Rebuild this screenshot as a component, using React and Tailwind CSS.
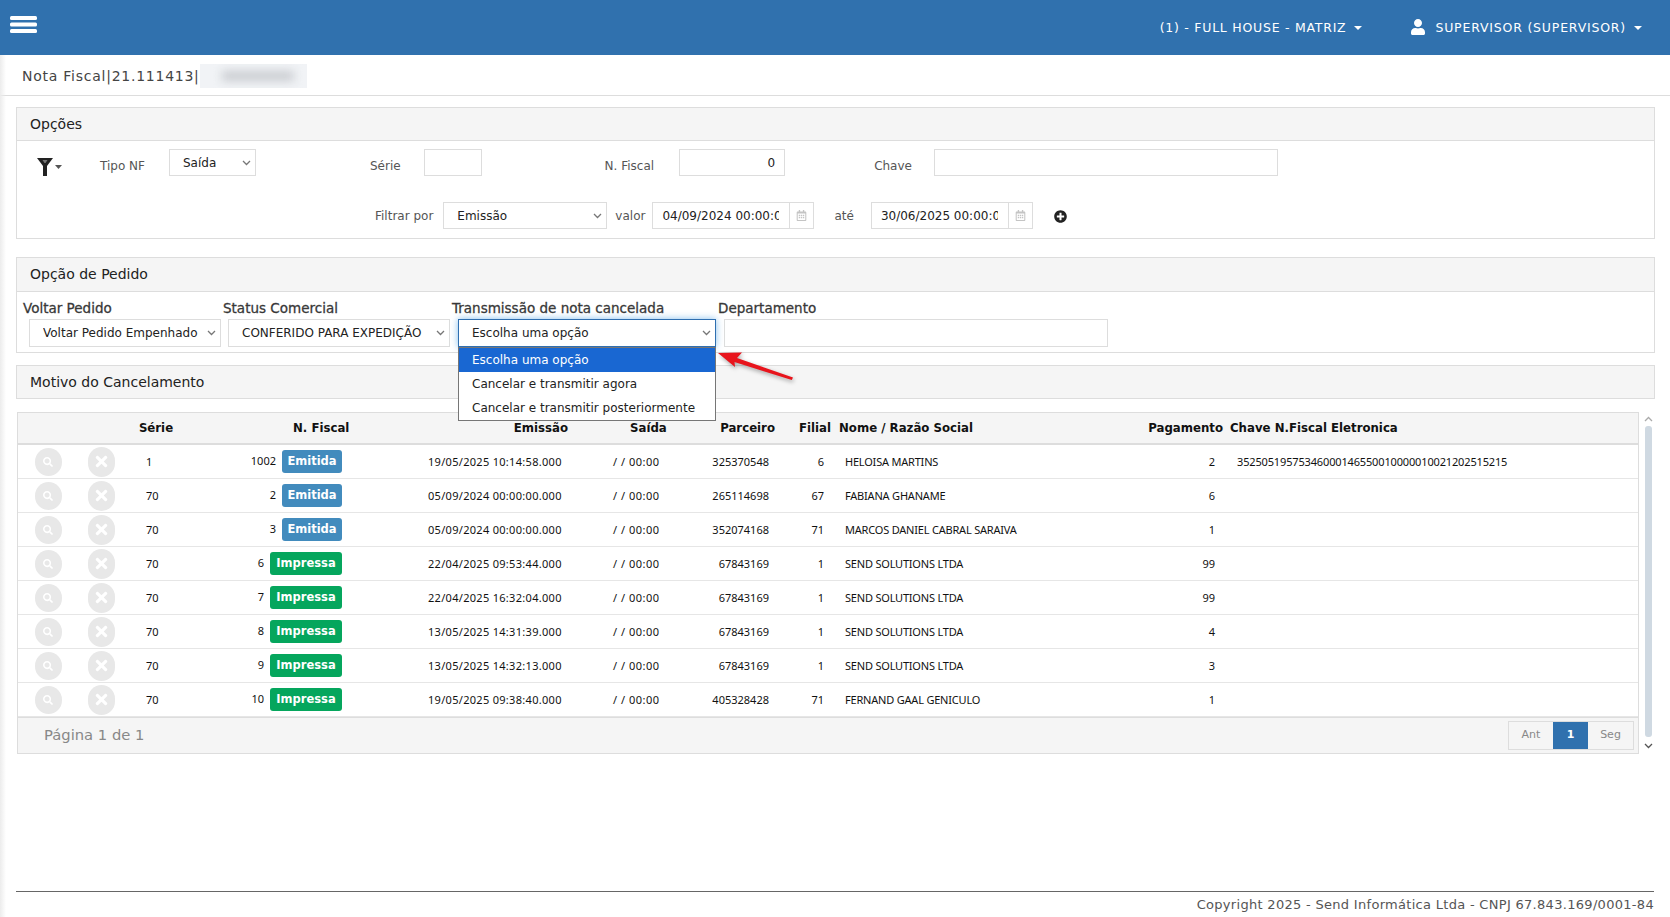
import React from 'react';
import { FaUser, FaSearch, FaTimes, FaPlusCircle, FaRegCalendarAlt } from 'react-icons/fa';

const rows = [
  { serie: '1', nf: '1002', status: 'Emitida', emissao: '19/05/2025 10:14:58.000', parceiro: '325370548', filial: '6', nome: 'HELOISA MARTINS', pag: '2', chave: '35250519575346000146550010000010021202515215' },
  { serie: '70', nf: '2', status: 'Emitida', emissao: '05/09/2024 00:00:00.000', parceiro: '265114698', filial: '67', nome: 'FABIANA GHANAME', pag: '6', chave: '' },
  { serie: '70', nf: '3', status: 'Emitida', emissao: '05/09/2024 00:00:00.000', parceiro: '352074168', filial: '71', nome: 'MARCOS DANIEL CABRAL SARAIVA', pag: '1', chave: '' },
  { serie: '70', nf: '6', status: 'Impressa', emissao: '22/04/2025 09:53:44.000', parceiro: '67843169', filial: '1', nome: 'SEND SOLUTIONS LTDA', pag: '99', chave: '' },
  { serie: '70', nf: '7', status: 'Impressa', emissao: '22/04/2025 16:32:04.000', parceiro: '67843169', filial: '1', nome: 'SEND SOLUTIONS LTDA', pag: '99', chave: '' },
  { serie: '70', nf: '8', status: 'Impressa', emissao: '13/05/2025 14:31:39.000', parceiro: '67843169', filial: '1', nome: 'SEND SOLUTIONS LTDA', pag: '4', chave: '' },
  { serie: '70', nf: '9', status: 'Impressa', emissao: '13/05/2025 14:32:13.000', parceiro: '67843169', filial: '1', nome: 'SEND SOLUTIONS LTDA', pag: '3', chave: '' },
  { serie: '70', nf: '10', status: 'Impressa', emissao: '19/05/2025 09:38:40.000', parceiro: '405328428', filial: '71', nome: 'FERNAND GAAL GENICULO', pag: '1', chave: '' },
];

const gridCols = 'grid grid-cols-[60px_46px_64px_232px_170px_100px_90px_55px_310px_83px_1fr]';

const Chevron = ({ className = '' }) => (
  <svg className={className} width="9" height="6" viewBox="0 0 9 6" fill="none" stroke="currentColor" strokeWidth="1.3">
    <path d="M1 1l3.5 3.5L8 1" />
  </svg>
);

const Caret = () => <span className="ml-[8px] inline-block border-x-[4px] border-t-[4px] border-x-transparent border-t-white align-middle" />;

const Select = ({ value, className = '', focused = false, children }) => (
  <div className={`relative ${className}`}>
    <select
      defaultValue={value}
      className={`w-full h-full appearance-none bg-white pl-[13px] text-[12px] text-[#222] outline-none border ${focused ? 'border-[#2f6fb0] shadow-[0_0_7px_rgba(102,175,233,0.8)]' : 'border-[#ddd]'}`}
    >
      <option>{value}</option>
    </select>
    <Chevron className="absolute right-[5px] top-1/2 -translate-y-1/2 text-[#777] pointer-events-none" />
    {children}
  </div>
);

const Panel = ({ title, children, className = '', headerHeight = 'h-[32px]' }) => (
  <section className={`border border-[#ddd] ${className}`}>
    <div className={`${headerHeight} bg-[#f5f5f5] flex items-center pl-[13px] text-[14px] text-[#222]`}>{title}</div>
    {children && <div className="border-t border-[#ddd]">{children}</div>}
  </section>
);

const DateField = ({ value }) => (
  <div className="flex h-[27px] w-[162px] border border-[#ddd]">
    <input readOnly value={value} className="w-[136px] min-w-0 pl-[9px] pr-[10px] text-[12px] text-[#222] outline-none bg-white" />
    <div className="flex-1 border-l border-[#ddd] flex items-center justify-center text-[#c4c4c4]">
      <FaRegCalendarAlt size={11} />
    </div>
  </div>
);

const FilterIcon = () => (
  <svg width="26" height="20" viewBox="0 0 26 20" className="text-[#222]">
    <path d="M0 1h16l-6 8v10H6V9z" fill="currentColor" />
    <path d="M5.5 3h5l-2 3h-1z" fill="#777" />
    <path d="M18 8h7l-3.5 4z" fill="#555" />
  </svg>
);

const Row = ({ row }) => (
  <div className={`${gridCols} h-[34px] items-center border-b border-[#e6e6e6] last:border-b-0 text-[11px] text-[#111] font-['Noto_Sans',sans-serif]`}>
    <div className="flex justify-center">
      <span className="w-[27px] h-[28px] rounded-full bg-[#e8e8e8] flex items-center justify-center text-white"><FaSearch size={10} /></span>
    </div>
    <div className="flex justify-center">
      <span className="w-[27px] h-[30px] rounded-full bg-[#e8e8e8] flex items-center justify-center text-white"><FaTimes size={17} /></span>
    </div>
    <div className="pl-[22px] pt-[2px]">{row.serie}</div>
    <div className="flex items-center justify-end gap-[6px] w-[154px]">
      <span>{row.nf}</span>
      <span className={`h-[23px] rounded-[3px] flex items-center justify-center text-white font-bold text-[11.5px] font-['DejaVu_Sans',sans-serif] ${row.status === 'Emitida' ? 'w-[60px] bg-[#428bbd]' : 'w-[72px] bg-[#05a65d]'}`}>
        {row.status}
      </span>
    </div>
    <div className="pl-[8px] pt-[2px] tracking-[0.3px]">{row.emissao}</div>
    <div className="pl-[23px] pt-[2px] tracking-[0.5px]">/ / 00:00</div>
    <div className="text-right pr-[11px] pt-[2px]">{row.parceiro}</div>
    <div className="text-right pr-[11px] pt-[2px]">{row.filial}</div>
    <div className="pl-[10px] pt-[2px] tracking-[-0.2px]">{row.nome}</div>
    <div className="text-right pr-[13px] pt-[2px]">{row.pag}</div>
    <div className="pl-[9px] pt-[2px] tracking-[-0.15px]">{row.chave}</div>
  </div>
);

export default function App() {
  return (
    <div className="relative w-[1670px] min-h-[917px] bg-white overflow-hidden font-['DejaVu_Sans',sans-serif]">
      <header className="h-[55px] bg-[#3071ae] flex items-center text-white text-[12.5px]">
        <svg width="28" height="17" viewBox="0 0 28 17" className="ml-[10px] mb-[7px]" fill="#fff">
          <rect x="0" y="0" width="27" height="4" rx="1.5" />
          <rect x="0" y="6.5" width="27" height="4" rx="1.5" />
          <rect x="0" y="13" width="27" height="4" rx="1.5" />
        </svg>
        <div className="ml-auto flex items-center mt-px">
          <span className="tracking-[0.75px]">(1) - FULL HOUSE - MATRIZ</span>
          <Caret />
          <FaUser size={16} className="ml-[48px] mb-[3px]" />
          <span className="ml-[9px] tracking-[0.8px]">SUPERVISOR (SUPERVISOR)</span>
          <Caret />
          <span className="w-[28px]" />
        </div>
      </header>

      <div className="h-[41px] border-b border-[#ddd] flex items-center pl-[22px] pt-[2px] text-[14px] text-[#444]">
        <span className="tracking-[0.75px]">Nota Fiscal|21.111413|</span>
        <span className="relative w-[107px] h-[24px] bg-[#f1f3f6] overflow-hidden">
          <span className="absolute left-[22px] top-[7px] w-[72px] h-[10px] bg-[#c9ccd0] blur-[5px]" />
        </span>
      </div>

      <main className="px-[16px] pt-[11px]">
        <Panel title="Opções" className="w-[1639px]">
          <div className="h-[97px] pt-[8px] text-[12px] text-[#555]">
            <div className="flex items-center h-[27px]">
              <span className="ml-[20px] mt-[8px]"><FilterIcon /></span>
              <span className="ml-[37px] mt-[6px]">Tipo NF</span>
              <Select value="Saída" className="ml-[24px] w-[87px] h-[27px]" />
              <span className="ml-[114px] mt-[6px]">Série</span>
              <input className="ml-[23px] w-[58px] h-[27px] border border-[#ddd] outline-none" />
              <span className="ml-[123px] mt-[6px]">N. Fiscal</span>
              <input readOnly value="0" className="ml-[25px] w-[106px] h-[27px] border border-[#ddd] outline-none text-right pr-[9px] text-[#222]" />
              <span className="ml-[89px] mt-[6px]">Chave</span>
              <input className="ml-[22px] w-[344px] h-[27px] border border-[#ddd] outline-none" />
            </div>
            <div className="flex items-center h-[27px] mt-[26px]">
              <span className="ml-[358px]">Filtrar por</span>
              <Select value="Emissão" className="ml-[10px] w-[164px] h-[27px]" />
              <span className="ml-[8px]">valor</span>
              <span className="ml-[7px]"><DateField value="04/09/2024 00:00:00" /></span>
              <span className="ml-[20px]">até</span>
              <span className="ml-[17px]"><DateField value="30/06/2025 00:00:00" /></span>
              <FaPlusCircle size={13} className="ml-[21px] mt-[2px] text-[#222]" />
            </div>
          </div>
        </Panel>

        <Panel title="Opção de Pedido" headerHeight="h-[33px]" className="w-[1639px] mt-[18px]">
          <div className="h-[60px] flex pl-[6px] pt-[6px] text-[13.5px] text-[#333] [-webkit-text-stroke:0.3px_#444]">
            <div className="w-[200px]">
              <div className="h-[21px] leading-[21px]">Voltar Pedido</div>
              <Select value="Voltar Pedido Empenhado" className="ml-[6px] w-[192px] h-[28px] [-webkit-text-stroke:0]" />
            </div>
            <div className="w-[229px]">
              <div className="h-[21px] leading-[21px]">Status Comercial</div>
              <Select value="CONFERIDO PARA EXPEDIÇÃO" className="ml-[5px] w-[222px] h-[28px] [-webkit-text-stroke:0]" />
            </div>
            <div className="w-[266px]">
              <div className="h-[21px] leading-[21px]">Transmissão de nota cancelada</div>
              <Select value="Escolha uma opção" focused className="ml-[6px] w-[258px] h-[28px] [-webkit-text-stroke:0]">
                <ul className="absolute z-10 left-0 top-[28px] w-full h-[74px] bg-white border border-[#767676] text-[12px] text-[#222]">
                  <li className="h-[24px] leading-[24px] pl-[13px] bg-[#1967d2] text-white">Escolha uma opção</li>
                  <li className="h-[24px] leading-[24px] pl-[13px]">Cancelar e transmitir agora</li>
                  <li className="h-[24px] leading-[24px] pl-[13px]">Cancelar e transmitir posteriormente</li>
                </ul>
              </Select>
            </div>
            <div className="flex-1">
              <div className="h-[21px] leading-[21px]">Departamento</div>
              <input className="ml-[6px] w-[384px] h-[28px] border border-[#ddd] outline-none" />
            </div>
          </div>
        </Panel>

        <Panel title="Motivo do Cancelamento" className="w-[1639px] mt-[12px]" />

        <div className="flex mt-[13px]">
          <div className="w-[1622px] shrink-0 ml-px border border-[#ddd]">
            <div className={`${gridCols} h-[32px] pt-[2px] items-center bg-[#f5f5f5] border-b-2 border-[#ddd] text-[11.75px] font-bold text-[#111]`}>
              <div />
              <div />
              <div className="text-center">Série</div>
              <div className="pl-[105px]">N. Fiscal</div>
              <div className="text-right pr-[22px]">Emissão</div>
              <div className="pl-[40px]">Saída</div>
              <div className="text-right pr-[5px]">Parceiro</div>
              <div className="text-right pr-[4px]">Filial</div>
              <div className="pl-[4px]">Nome / Razão Social</div>
              <div className="text-right pr-[5px]">Pagamento</div>
              <div className="pl-[2px]">Chave N.Fiscal Eletronica</div>
            </div>
            {rows.map((row) => <Row key={row.nf} row={row} />)}
            <div className="h-[36px] bg-[#f5f5f5] border-t border-[#ddd] flex items-center justify-between pl-[26px] pr-[4px]">
              <span className="text-[14.75px] text-[#888]">Página 1 de 1</span>
              <div className="flex h-[29px] border border-[#ddd] text-[11px]">
                <span className="w-[44px] flex items-center justify-center text-[#888]">Ant</span>
                <span className="w-[35px] flex items-center justify-center bg-[#3071ae] text-white font-bold">1</span>
                <span className="w-[45px] flex items-center justify-center text-[#888]">Seg</span>
              </div>
            </div>
          </div>
          <div className="w-[15px] shrink-0 pl-[3px] flex flex-col items-center text-[#aaa]">
            <Chevron className="mt-[4px] rotate-180" />
            <div className="w-[7px] h-[311px] mt-[4px] rounded-[3px] bg-[#cfd9e2]" />
            <Chevron className="mt-[6px] text-[#555]" />
          </div>
        </div>
      </main>

      <footer className="mx-[16px] mt-[137px] border-t border-[#666] pt-[3px] text-right text-[13px] text-[#555] tracking-[0.3px]">
        Copyright 2025 - Send Informática Ltda - CNPJ 67.843.169/0001-84
      </footer>

      <div className="absolute left-0 top-[55px] bottom-0 w-[6px] bg-gradient-to-r from-[#ececec] to-transparent" />

      <svg className="absolute left-[716px] top-[350px] z-20 drop-shadow-[1px_2px_2px_rgba(0,0,0,0.35)]" width="80" height="32" viewBox="0 0 80 32">
        <path d="M2 3l24-.5-5 5.5 56 19.5-1.2 2.5L18.5 12 19 17z" fill="#e8141c" />
      </svg>
    </div>
  );
}
